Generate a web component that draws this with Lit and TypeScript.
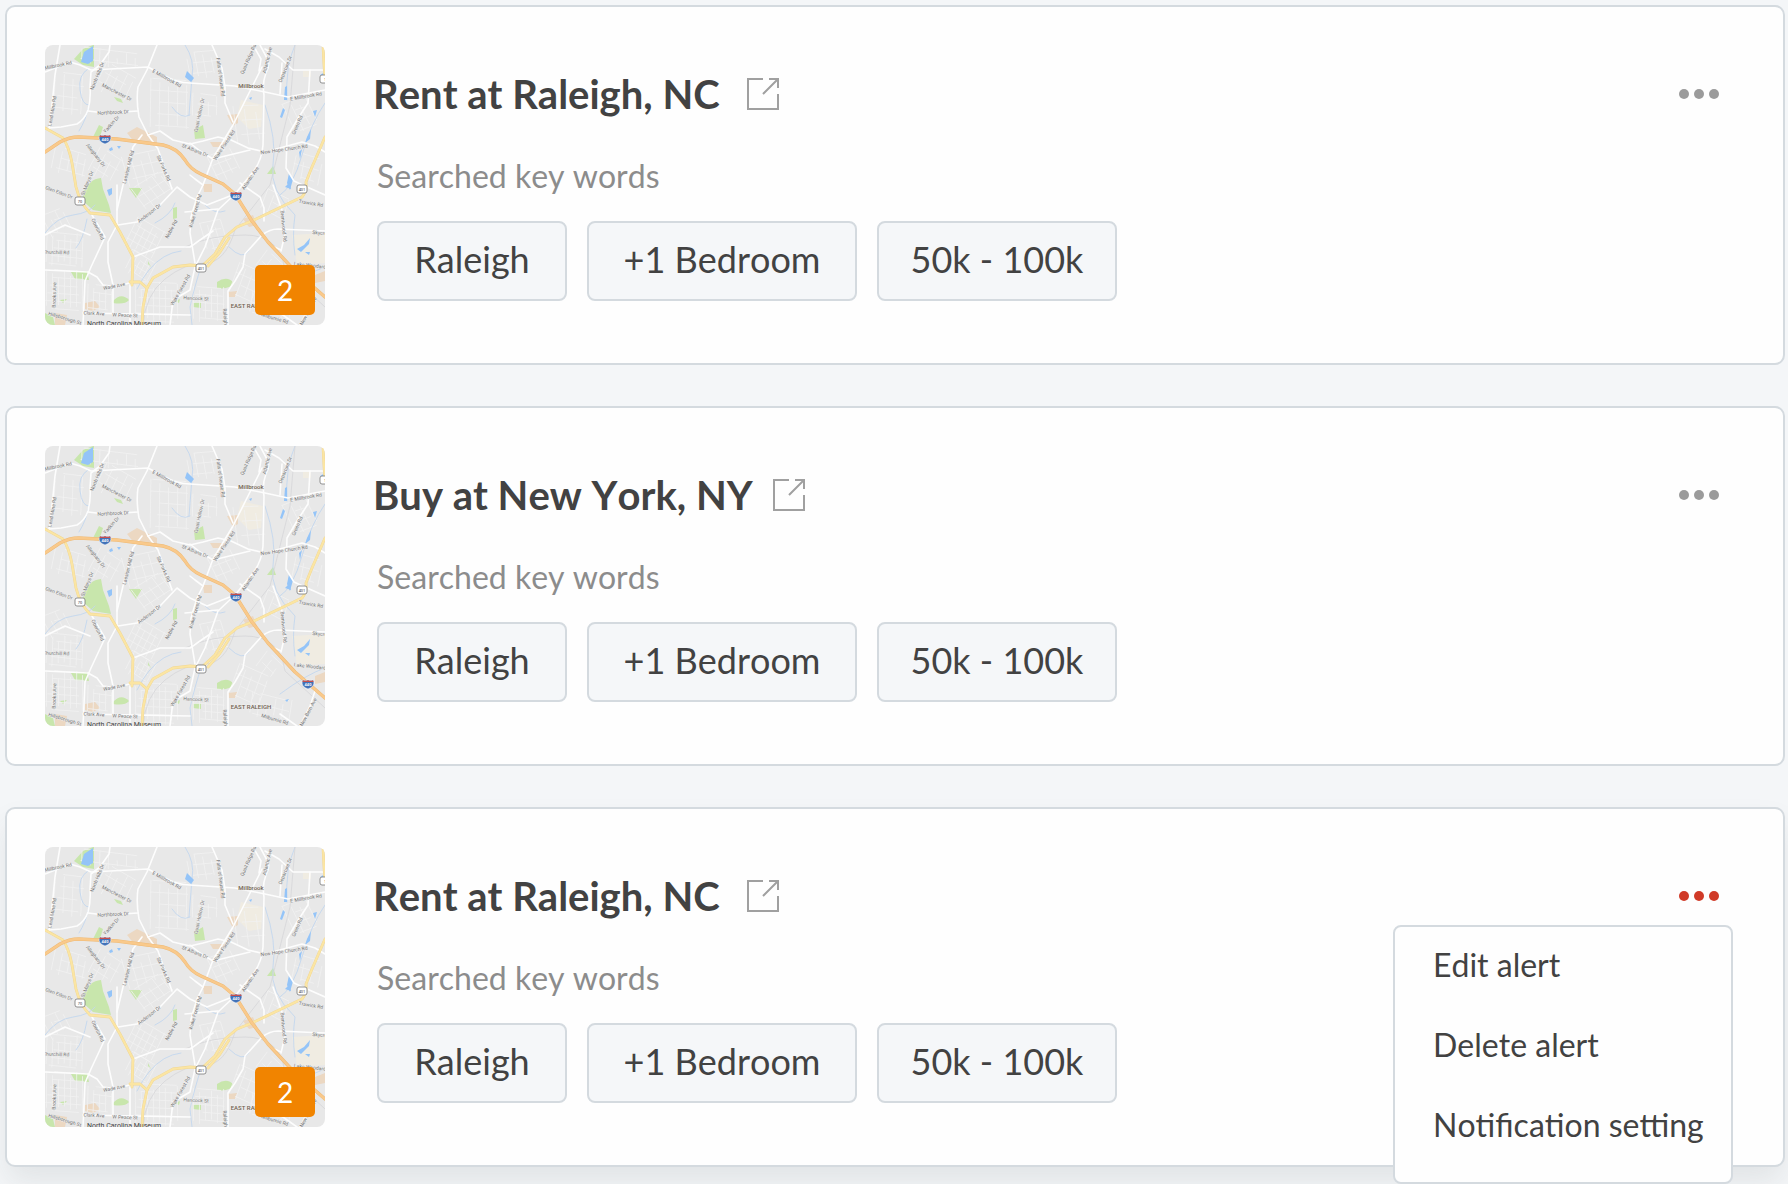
import { LitElement, html, svg, css, nothing } from "lit";
import { customElement, property, state } from "lit/decorators.js";

/* ---------- map artwork data (280 x 280 units) ---------- */

const mainRoads = [
  "M15 0L10 30L7 60L4 84",
  "M0 27L25 17L35 20L46 25L103 22L118 30Q132 38 145 38L190 41L220 47L243 52L280 45",
  "M65 0L64 7L55 20L46 27L45 42Q46 54 43 65Q40 74 32 79L16 82L4 83",
  "M112 0L102 25L93 42Q91 55 94 72L103 90L113 104L127 144",
  "M43 66L60 68L93 66",
  "M103 90L115 86L128 95L145 99L158 96L173 92L186 95L203 103L220 107L257 97L270 101L280 107",
  "M167 0L177 23L180 42V58L188 77",
  "M217 22L207 42L188 80L168 113L158 140L152 152L146 172L145 188L150 218",
  "M215 0L223 15Q225 20 221 28Q217 38 219 50L218 100Q217 115 208 127L190 149L173 165L160 202L150 222",
  "M208 0L216 14L214 26",
  "M220 4L234 12L248 25H280",
  "M237 18L235 49",
  "M265 25L263 58L252 75L242 92L241 123L249 136L262 142L280 150",
  "M145 98L155 106L168 114L205 105",
  "M97 90L88 102L78 140L72 165",
  "M47 170L60 192L46 222L40 236L38 280",
  "M72 140V180L63 197V217L68 240V270",
  "M73 180L92 177L115 160L132 142L145 152L162 160L190 149",
  "M0 225L43 227L52 232L58 240L72 242L87 237",
  "M88 212L115 202H145L168 186",
  "M85 240V280",
  "M38 268L90 269L145 270",
  "M217 190Q225 184 233 184L280 186",
  "M217 190L200 209L198 222L190 236L183 246V280",
  "M228 140L238 168L240 189L236 206",
  "M195 138L215 152L219 163V176",
  "M140 167L173 164",
  "M150 222L145 245L128 255L125 280",
  "M0 190L20 180L45 190",
  "M270 245L265 260L255 280",
  "M236 205L225 200L217 190",
  "M252 280L235 268",
  "M158 140L150 134L145 130",
];

const yellowRoads = [
  "M0 83L18 93Q24 102 27 118L31 142Q35 158 45 168L65 170L75 187L88 212L87 240",
  "M85 237L95 237L102 243L98 262L97 280",
  "M102 243L108 233L128 222L145 220L157 221L170 209L180 192L192 182L207 176L257 152Q262 146 261 137L267 122L280 92",
  "M278 0L279 20L280 34",
  "M163 221L175 207L184 193",
];

const freeway =
  "M0 107L15 97Q24 92 34 92L72 94L118 100Q132 103 140 115Q145 124 156 129L178 139L190 149L207 176L223 197L250 226L280 252";

const streams = [
  "M43 24Q33 30 35 45T44 60Q41 75 34 86",
  "M42 174Q38 195 31 203",
  "M0 188Q12 172 28 170T50 160",
  "M140 0Q150 15 147 32L144 70",
  "M220 60Q232 95 228 120T250 170Q247 190 250 210",
  "M280 58Q266 78 257 110T235 150",
  "M250 0Q240 22 242 55",
  "M92 244Q98 232 104 225Q118 208 136 206",
  "M155 225Q150 240 145 262L147 280",
  "M184 202Q198 216 204 206",
  "M235 248Q262 228 280 222",
  "M127 62Q136 75 145 70",
  "M110 178Q126 170 130 158",
  "M160 160Q170 170 180 166",
];

const parks = [
  "M29 14L38 4L48 0H49V22L38 20Z",
  "M48 92L54 80L58 82L55 92Z",
  "M69 52L76 54L78 58L72 56Z",
  "M38 148Q44 134 56 133L58 144L64 160L66 168L48 165L38 156Z",
  "M149 85L158 80L160 93L150 94Z",
  "M84 143H97L91 153Z",
  "M128 163L132 162V173L128 174Z",
  "M26 227L42 226L44 235L30 234Z",
  "M68 256Q76 247 84 255Q80 260 68 258Z",
  "M172 237Q182 230 189 238Q184 245 172 243Z",
  "M148 258L156 257V263L148 262Z",
  "M222 129L228 121L231 129Z",
  "M130 256L135 254L134 258Z",
  "M15 255L22 254L18 258Z",
  "M103 216L106 222L103 219Z",
  "M0 268L8 272L10 280H0Z",
];

const tanAreas = [
  "M82 88L92 82L112 92L112 101L90 98Z",
  "M182 70L193 69V78L188 81Z",
  "M40 258L50 256L55 262L48 266L40 264Z",
  "M10 268L22 270L20 280H10Z",
  "M175 42H179V51H175Z",
  "M198 174L208 170L212 180L204 182Z",
  "M158 139H167V147H159Z",
  "M270 230L280 226V236L270 238Z",
  "M183 247L192 246L190 252H184Z",
  "M165 97H180L178 102H168Z",
];

const paleAreas = [
  "M196 55L218 60L216 82L204 84L192 72Z",
  "M247 190L280 188V218L252 220Z",
  "M258 26H266V32H258Z",
];

const lakes = [
  "M39 7L48 1V16L43 19L36 17Z",
  "M142 26L149 33L146 37L140 32Z",
  "M240 42L242 41V55H239Z",
  "M62 145L67 143V149L64 151Z",
  "M64 104L67 102L68 105L65 106Z",
  "M72 101L76 101L74 104Z",
  "M262 92L266 84L265 94L260 98Z",
  "M244 128L248 134L245 145L242 138Z",
  "M235 72L238 63L240 65L237 73Z",
  "M254 107L257 104L255 114Z",
  "M268 66L272 65L270 72Z",
  "M252 204L259 200L265 193L264 199L256 207Z",
  "M260 207H265L264 210Z",
  "M240 254L244 253L242 256Z",
  "M240 142L244 138L246 144Z",
  "M204 53L207 52L206 55Z",
  "M275 30L280 27V32Z",
];

/* x, y, rotation, text */
const streetLabels: [number, number, number, string][] = [
  [13, 20, -12, "Millbrook Rd"],
  [7, 66, -80, "Lead Mine Rd"],
  [52, 31, -68, "North Hills Dr"],
  [72, 47, 27, "Manchester Dr"],
  [68, 67, -3, "Northbrook Dr"],
  [66, 79, -48, "Yadkin Dr"],
  [51, 110, 52, "Alleghany Dr"],
  [83, 122, -76, "Lassiter Mill Rd"],
  [119, 123, 66, "Six Forks Rd"],
  [122, 33, 29, "E Millbrook Rd"],
  [150, 105, 22, "St Albans Dr"],
  [176, 32, 82, "Falls of Neuse Rd"],
  [203, 14, -66, "Quail Ridge Rd"],
  [222, 15, -76, "Atlantic Ave"],
  [240, 24, -68, "Departure Dr"],
  [261, 51, -10, "E Millbrook Rd"],
  [154, 70, -78, "Quail Hollow Dr"],
  [179, 100, -56, "Wake Forest Rd"],
  [239, 104, -8, "New Hope Church Rd"],
  [252, 80, -66, "Green Rd"],
  [205, 133, -56, "Atlantic Ave"],
  [14, 147, 20, "Glen Eden Dr"],
  [42, 138, -68, "St Marys Dr"],
  [53, 184, 64, "Oberlin Rd"],
  [104, 168, -38, "Anderson Dr"],
  [126, 184, -62, "Noble Rd"],
  [11, 207, 2, "Churchill Rd"],
  [69, 241, -11, "Wade Ave"],
  [9, 250, -88, "Brooks Ave"],
  [49, 268, 3, "Clark Ave"],
  [80, 270, 2, "W Peace St"],
  [20, 273, 17, "Hillsborough St"],
  [135, 245, -60, "Wake Forest Rd"],
  [151, 253, 3, "Hancock St"],
  [150, 166, -74, "Wake Forest Rd"],
  [266, 158, 10, "Trawick Rd"],
  [239, 181, 84, "Brentwood Rd"],
  [280, 188, 4, "Skycrest Dr"],
  [265, 220, 6, "Lake Woodard"],
  [230, 273, 16, "Milburnie Rd"],
  [263, 266, -62, "New Bern Ave"],
  [181, 277, 86, "Raleigh Blvd"],
];

/* Blocks of residential streets: centre x, centre y, width, height, angle, spacing */
const blocks: number[][] = [
  [24, 50, 30, 44, 4, 9], [70, 38, 34, 30, 28, 8], [66, 14, 60, 18, 6, 9],
  [125, 60, 40, 52, 2, 9], [158, 20, 30, 28, -8, 8], [205, 80, 30, 40, -6, 11],
  [25, 118, 36, 26, 14, 8], [100, 124, 40, 34, -14, 9], [60, 122, 28, 30, 30, 8],
  [20, 205, 38, 34, 4, 6], [100, 195, 34, 34, 28, 6], [95, 222, 26, 24, 30, 5],
  [20, 245, 38, 40, 2, 6], [55, 255, 26, 30, 4, 6], [112, 258, 44, 42, 1, 6],
  [165, 260, 34, 36, 2, 6], [205, 240, 36, 34, 22, 8], [225, 262, 40, 24, 12, 8],
  [170, 190, 24, 30, -14, 7], [255, 70, 24, 34, -24, 8], [262, 125, 28, 30, 14, 9],
  [180, 120, 26, 30, -24, 8], [225, 222, 26, 22, 40, 9], [110, 145, 38, 28, -34, 8],
  [160, 62, 26, 26, 4, 8], [230, 160, 26, 24, 24, 8], [12, 178, 22, 26, -24, 7],
];

function blockPath([cx, cy, w, h, angle, step]: number[]): string {
  const a = (angle * Math.PI) / 180;
  const at = (x: number, y: number) =>
    `${(cx + x * Math.cos(a) - y * Math.sin(a)).toFixed(1)} ${(cy + x * Math.sin(a) + y * Math.cos(a)).toFixed(1)}`;
  let d = "";
  let i = 0;
  for (let x = -w / 2; x <= w / 2; x += step, i++) {
    const cut = ((i * 7 + cx) % 5) * 2;
    d += `M${at(x, -h / 2 + cut)}L${at(x + 1, h / 2 - ((cut + 4) % 7))}`;
  }
  for (let y = -h / 2; y <= h / 2; y += step * 1.3, i++) {
    const cut = ((i * 5 + cy) % 6) * 2;
    d += `M${at(-w / 2 + cut, y)}L${at(w / 2 - ((cut + 3) % 8), y + 1)}`;
  }
  return d;
}

const minorStreets = blocks.map(blockPath).join("");

@customElement("area-map")
export class AreaMap extends LitElement {
  static styles = css`
    :host {
      display: block;
    }
    .map {
      display: block;
      width: 100%;
      height: auto;
      border-radius: 8px;
      background: #e8e8e8;
      font-family: Roboto, "Liberation Sans", sans-serif;
    }
    .line {
      fill: none;
      stroke-linejoin: round;
      stroke-linecap: round;
    }
    .minor { stroke: #f1f1f1; stroke-width: 0.8; }
    .stream { stroke: #c3d7ee; stroke-width: 0.9; }
    .rail { stroke: #d6d6d8; stroke-width: 0.8; }
    .road { stroke: #fdfdfd; stroke-width: 1.6; }
    .yellow-edge { stroke: #f0d795; stroke-width: 2.8; }
    .yellow { stroke: #fbe5a3; stroke-width: 2; }
    .freeway-edge { stroke: #eebb78; stroke-width: 3.4; }
    .freeway { stroke: #f9c98b; stroke-width: 2.4; }
    .park { fill: #c8e6ac; }
    .tan { fill: #ecd8c2; }
    .pale { fill: #f0ece2; }
    .lake { fill: #94c4f8; }
    .street {
      font-size: 5px;
      text-anchor: middle;
      fill: #747474;
      stroke: #efefef;
      stroke-width: 0.8;
      paint-order: stroke;
    }
    .place {
      font-size: 6px;
      font-weight: 500;
      text-anchor: middle;
      fill: #6f5f4e;
      stroke: #efefef;
      stroke-width: 0.8;
      paint-order: stroke;
    }
    .museum {
      font-size: 7px;
      text-anchor: middle;
      fill: #444444;
    }
    .shield-text {
      font-size: 4px;
      font-weight: 700;
      text-anchor: middle;
      fill: #ffffff;
    }
    .route-text {
      font-size: 4px;
      text-anchor: middle;
      fill: #444444;
    }
    .shield-blue { fill: #4272b8; stroke: #ffffff; stroke-width: 0.5; }
    .shield-red { fill: #c9504c; }
    .route { fill: #ffffff; stroke: #777777; stroke-width: 0.8; }
  `;

  private interstate(x: number, y: number) {
    return svg`<g transform="translate(${x} ${y})">
      <path class="shield-blue" d="M-5-4Q-2.500-3 0-4Q2.500-3 5-4Q7-1 5 2Q3 4 0 5Q-3 4-5 2Q-7-1-5-4Z"></path>
      <path class="shield-red" d="M-5-3.800Q-2.500-2.800 0-3.800Q2.500-2.800 5-3.800L5.700-2H-5.700Z"></path>
      <text class="shield-text" y="2">440</text>
    </g>`;
  }

  private route(x: number, y: number, label: string) {
    return svg`<g transform="translate(${x} ${y})">
      <rect class="route" x="-5" y="-4" width="10" height="8" rx="2"></rect>
      <text class="route-text" y="1.500">${label}</text>
    </g>`;
  }

  render() {
    const lines = (name: string, ds: string[]) => ds.map((d) => svg`<path class=${"line " + name} d=${d}></path>`);
    const areas = (name: string, ds: string[]) => ds.map((d) => svg`<path class=${name} d=${d}></path>`);
    return html`<svg class="map" viewBox="0 0 280 280" role="img" aria-label="Map">
      ${areas("pale", paleAreas)} ${areas("tan", tanAreas)} ${areas("park", parks)}
      ${lines("minor", [minorStreets])} ${lines("stream", streams)}
      ${lines("rail", [
        "M98 280Q100 250 120 234T160 218T190 185L225 140L245 60L250 0",
        "M140 202Q165 190 200 190T240 225L280 262",
      ])}
      ${areas("lake", lakes)} ${lines("road", mainRoads)}
      ${lines("yellow-edge", yellowRoads)} ${lines("yellow", yellowRoads)}
      ${lines("freeway-edge", [freeway])} ${lines("freeway", [freeway])}
      ${streetLabels.map(
        ([x, y, r, t]) => svg`<text class="street" transform="translate(${x} ${y}) rotate(${r})" y="2">${t}</text>`,
      )}
      <text class="place" x="206" y="43">Millbrook</text>
      <text class="place" x="206" y="263">EAST RALEIGH</text>
      <text class="museum" x="79" y="281">North Carolina Museum</text>
      ${this.interstate(60, 94)} ${this.interstate(191, 151)} ${this.interstate(263, 238)}
      ${this.route(257, 144, "401")} ${this.route(156, 223, "401")}
      ${this.route(35, 156, "70")} ${this.route(280, 34, "1")}
    </svg>`;
  }
}

/* ---------- alerts ---------- */

interface Alert {
  title: string;
  keywords: string[];
  unread?: number;
}

@customElement("alert-card")
export class AlertCard extends LitElement {
  @property({ attribute: false }) alert!: Alert;
  @property({ type: Boolean, reflect: true }) open = false;

  static styles = css`
    :host {
      display: block;
    }
    .card {
      display: flex;
      gap: 48px;
      box-sizing: border-box;
      padding: 38px;
      border: 2px solid #d4dadf;
      border-radius: 10px;
      background: #fefefe;
    }
    .card.active {
      box-shadow: 0 16px 30px -2px rgba(60, 66, 72, 0.1);
    }
    .thumb {
      position: relative;
      flex: none;
      width: 280px;
      height: 280px;
    }
    .badge {
      position: absolute;
      right: 10px;
      bottom: 10px;
      width: 60px;
      border-radius: 5px;
      background: #f18400;
      color: #ffffff;
      font-size: 28px;
      line-height: 50px;
      text-align: center;
    }
    .body {
      flex: 1;
      min-width: 0;
    }
    .heading {
      display: flex;
      align-items: center;
      gap: 20px;
      padding-top: 23px;
    }
    .title {
      min-width: 354px;
      margin: 0;
      font-size: 40px;
      line-height: 52px;
      font-weight: 700;
      white-space: nowrap;
    }
    .open-link {
      display: block;
      color: #a0a0a0;
    }
    .icon {
      display: block;
      fill: none;
      stroke: currentColor;
      stroke-width: 2;
    }
    .details {
      padding: 36px 0 0 4px;
    }
    .caption {
      margin: 0;
      color: #8c8c8c;
      font-size: 32px;
      line-height: 40px;
    }
    .chips {
      display: grid;
      grid-template-columns: 190px 270px 240px;
      gap: 20px;
      margin: 25px 0 0;
      padding: 0;
      list-style: none;
    }
    .chip {
      padding-bottom: 4px;
      border: 2px solid #d4dadf;
      border-radius: 8px;
      background: #f5f7f9;
      font-size: 36px;
      line-height: 72px;
      text-align: center;
      white-space: nowrap;
    }
    .actions {
      position: relative;
      flex: none;
      padding: 36px 20px 0 0;
    }
    .more {
      display: block;
      padding: 8px 4px;
      border: 0;
      background: none;
      color: #9b9b9b;
      cursor: pointer;
    }
    .active .more {
      color: #d03a27;
    }
    .dots {
      display: block;
      fill: currentColor;
    }
    .menu {
      position: absolute;
      z-index: 1;
      top: 78px;
      right: 12px;
      box-sizing: border-box;
      width: 340px;
      padding-bottom: 15px;
      border: 2px solid #d4dadf;
      border-radius: 8px;
      background: #fefefe;
    }
    .item {
      display: block;
      width: 100%;
      padding: 0 0 4px 38px;
      border: 0;
      background: none;
      color: inherit;
      font: inherit;
      font-size: 32px;
      line-height: 76px;
      text-align: left;
      white-space: nowrap;
      cursor: pointer;
    }
  `;

  private toggle() {
    this.open = !this.open;
  }

  render() {
    const { title, keywords, unread } = this.alert;
    return html`<article class=${this.open ? "card active" : "card"}>
      <div class="thumb">
        <area-map></area-map>
        ${unread ? html`<span class="badge">${unread}</span>` : nothing}
      </div>
      <div class="body">
        <div class="heading">
          <h2 class="title">${title}</h2>
          <a class="open-link" href="#" aria-label="Open search">
            <svg class="icon" width="32" height="32" viewBox="0 0 32 32">
              <path d="M16 1H1V31H31V16"></path>
              <path d="M16 16L30 2M22 1H31V10"></path>
            </svg>
          </a>
        </div>
        <div class="details">
          <p class="caption">Searched key words</p>
          <ul class="chips">
            ${keywords.map((word) => html`<li class="chip">${word}</li>`)}
          </ul>
        </div>
      </div>
      <div class="actions">
        <button class="more" aria-label="Alert options" aria-expanded=${this.open ? "true" : "false"} @click=${this.toggle}>
          <svg class="dots" width="42" height="10" viewBox="0 0 42 10">
            <circle cx="5" cy="5" r="5"></circle>
            <circle cx="20" cy="5" r="5"></circle>
            <circle cx="35" cy="5" r="5"></circle>
          </svg>
        </button>
        ${this.open
          ? html`<div class="menu">
              <button class="item">Edit alert</button>
              <button class="item">Delete alert</button>
              <button class="item">Notification setting</button>
            </div>`
          : nothing}
      </div>
    </article>`;
  }
}

@customElement("app-root")
export class AppRoot extends LitElement {
  @state() private alerts: Alert[] = [
    { title: "Rent at Raleigh, NC", keywords: ["Raleigh", "+1 Bedroom", "50k - 100k"], unread: 2 },
    { title: "Buy at New York, NY", keywords: ["Raleigh", "+1 Bedroom", "50k - 100k"] },
    { title: "Rent at Raleigh, NC", keywords: ["Raleigh", "+1 Bedroom", "50k - 100k"], unread: 2 },
  ];

  static styles = css`
    :host {
      display: block;
      box-sizing: border-box;
      min-height: 100vh;
      padding: 5px 3px 17px 5px;
      background: #f4f6f8;
      color: #424242;
      font-family: Lato, "Open Sans", sans-serif;
      font-kerning: none;
    }
    .list {
      display: grid;
      gap: 41px;
    }
  `;

  render() {
    return html`<main class="list">
      ${this.alerts.map((alert, i) => html`<alert-card .alert=${alert} ?open=${i === 2}></alert-card>`)}
    </main>`;
  }
}
